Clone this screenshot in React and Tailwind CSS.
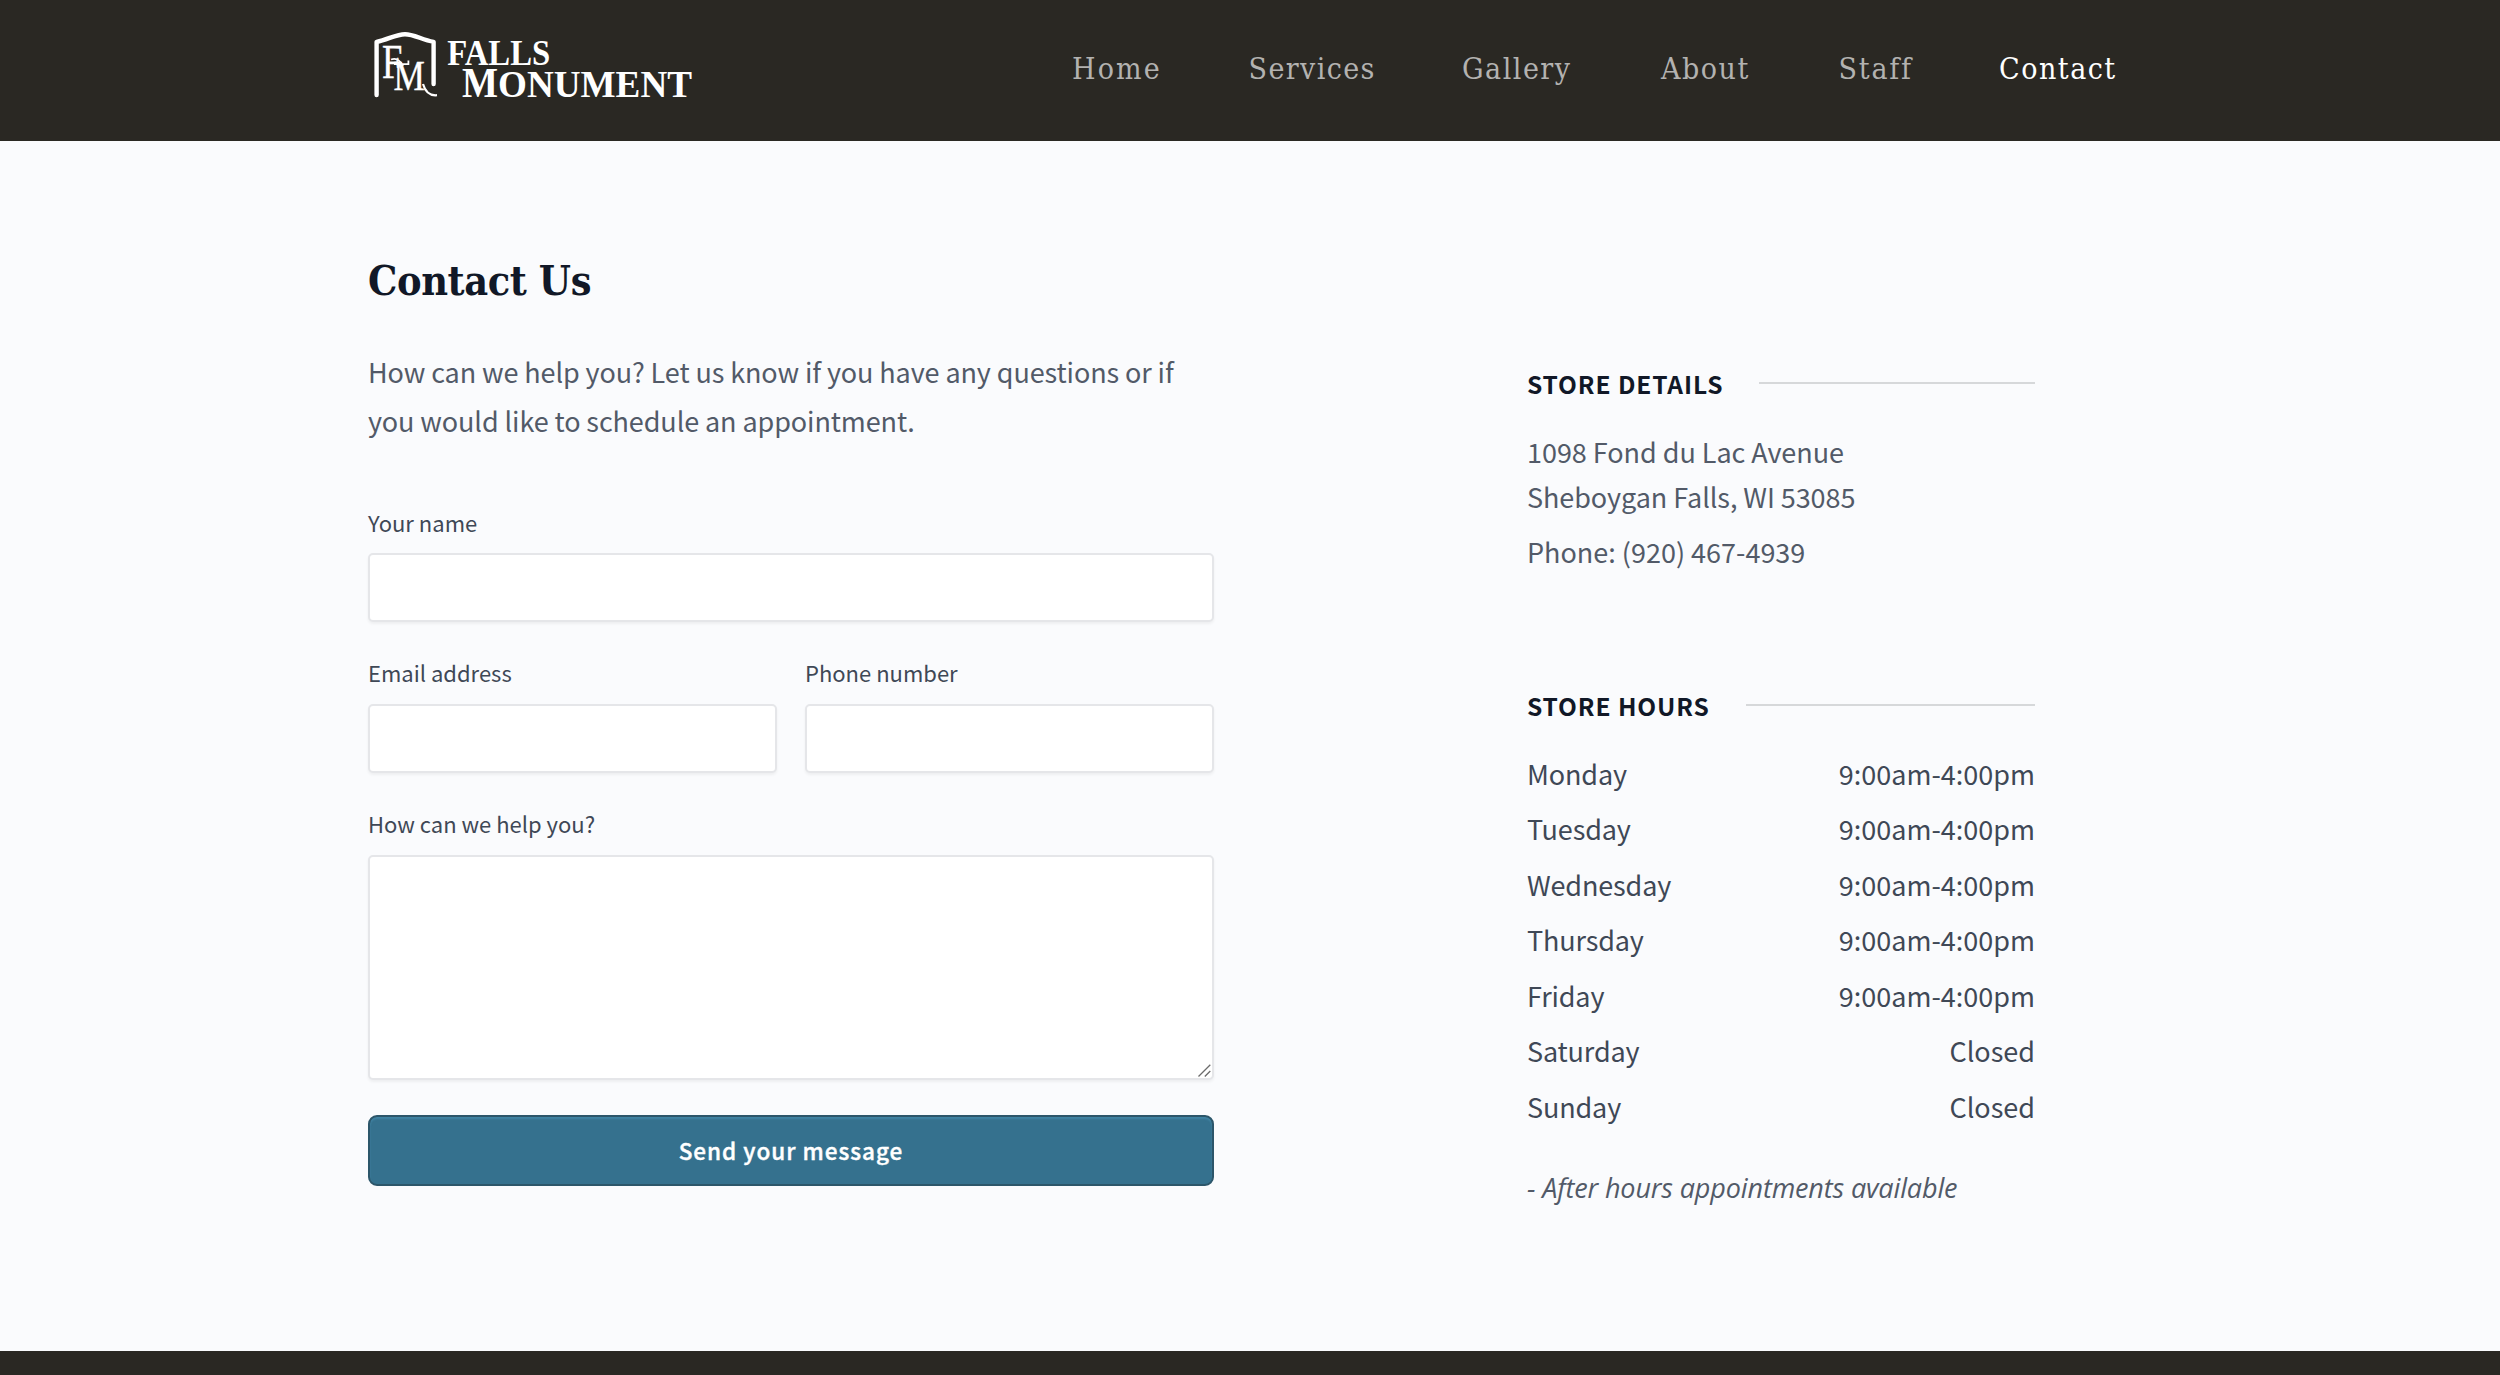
import React from "react";

const NAV = [
  { label: "Home", cls: "w-[88.5px] tracking-[2.1px]" },
  { label: "Services", cls: "w-[125.5px] tracking-[1.4px]" },
  { label: "Gallery", cls: "w-[111px] tracking-[1.5px]" },
  { label: "About", cls: "w-[89.5px] tracking-[1.5px]" },
  { label: "Staff", cls: "w-[72.5px] tracking-[1.8px]" },
  { label: "Contact", cls: "w-[118px] tracking-[1.5px]", active: true },
];

const HOURS = [
  ["Monday", "9:00am-4:00pm"],
  ["Tuesday", "9:00am-4:00pm"],
  ["Wednesday", "9:00am-4:00pm"],
  ["Thursday", "9:00am-4:00pm"],
  ["Friday", "9:00am-4:00pm"],
  ["Saturday", "Closed"],
  ["Sunday", "Closed"],
];

const FIELD =
  "block w-full rounded-[5px] border-2 border-[#e5e6e9] bg-white shadow-[0_2px_3px_rgba(0,0,0,0.05)] outline-none";

function Logo() {
  return (
    <svg
      width="328"
      height="76"
      viewBox="18 18 328 76"
      fill="#fff"
      fontFamily="'Liberation Serif', serif"
      role="img"
      aria-label="Falls Monument"
    >
      <path
        d="M26.6 85V31.8C38 29.5 46 24.2 55 24.2S72 29.8 83.6 31.8V74"
        fill="none"
        stroke="#fff"
        strokeWidth="4.4"
        strokeLinecap="round"
        strokeLinejoin="round"
      />
      <text transform="translate(32 67.6) scale(.76 1)" fontSize="48" stroke="#fff" strokeWidth=".4">F</text>
      <text transform="translate(43.6 79.8) scale(.84 1)" fontSize="42" stroke="#fff" strokeWidth=".4">M</text>
      <path d="M41 49.5C46 47.5 50 50 53 56M44 54.2H58.4V50.5" fill="none" stroke="#fff" strokeWidth="1.8" />
      <path d="M73 74C75 81 79 86 87 85.2" fill="none" stroke="#fff" strokeWidth="2.2" />
      <g fontWeight="700">
        <text x="97.2" y="55" fontSize="36.5" textLength="103" lengthAdjust="spacingAndGlyphs">FALLS</text>
        <text x="112" y="87" fontSize="42" textLength="36" lengthAdjust="spacingAndGlyphs">M</text>
        <text x="148" y="87" fontSize="37" textLength="194" lengthAdjust="spacingAndGlyphs">ONUMENT</text>
      </g>
    </svg>
  );
}

function Field({ label, children, className = "" }) {
  return (
    <label className={`block ${className}`}>
      <span className="block h-9 text-[22px] leading-9 text-[#3f4856]">{label}</span>
      {children}
    </label>
  );
}

function SectionTitle({ children }) {
  return (
    <div className="flex items-center gap-[36px]">
      <h2 className="text-[24.5px] leading-[35px] font-bold tracking-[0.9px] text-[#111827] uppercase">{children}</h2>
      <div className="mb-px h-[2px] flex-1 bg-[#d6d8da]" />
    </div>
  );
}

export default function App() {
  return (
    <div className="flex h-[1375px] w-[2500px] flex-col overflow-hidden bg-[#fafbfd] [font-family:'Noto_Sans_CJK_SC',sans-serif]">
      <header className="h-[141px] shrink-0 bg-[#2a2823]">
        <div className="mx-auto flex w-[1764px] justify-between pt-[28px]">
          <Logo />
          <nav className="mr-[15px] flex gap-[88px] pt-[21px] text-[30px] leading-[40px] [font-family:'DejaVu_Serif_Condensed','DejaVu_Serif',serif]">
            {NAV.map((n) => (
              <a key={n.label} href="#" className={`${n.cls} whitespace-nowrap ${n.active ? "text-white" : "text-[#b3b2b0]"}`}>
                {n.label}
              </a>
            ))}
          </nav>
        </div>
      </header>

      <main className="flex h-[1210px] shrink-0 pl-[368px]">
        <section className="w-[846px] pt-[115px]">
          <h1 className="text-[41px] leading-[50px] font-bold tracking-[-0.4px] text-[#111827] [font-family:'DejaVu_Serif_Condensed','DejaVu_Serif',serif]">
            Contact Us
          </h1>
          <p className="mt-[41px] text-[27px] leading-[49px] tracking-[-0.1px] whitespace-nowrap text-[#525a68]">
            How can we help you? Let us know if you have any questions or if
            <br />
            you would like to schedule an appointment.
          </p>
          <form className="mt-[59px]">
            <Field label="Your name">
              <input className={`${FIELD} mt-[13px] h-[69px]`} />
            </Field>
            <div className="mt-8 flex gap-7">
              <Field label="Email address" className="flex-1">
                <input className={`${FIELD} mt-[14px] h-[69px]`} />
              </Field>
              <Field label="Phone number" className="flex-1">
                <input className={`${FIELD} mt-[14px] h-[69px]`} />
              </Field>
            </div>
            <Field label="How can we help you?" className="relative mt-8">
              <textarea className={`${FIELD} mt-[14px] h-[225px] resize-none`} />
              <svg className="absolute right-[3px] bottom-[3px]" width="13" height="13" viewBox="0 0 13 13" stroke="#6b6b6b" strokeWidth="1.3">
                <path d="M.5 12.5L12.3.7M6.8 12.5L12.3 7" />
              </svg>
            </Field>
            <button
              type="button"
              className="mt-[35px] block h-[71px] w-full rounded-[9px] border-2 border-[#2c566a] bg-[#35718e] pt-px text-[22.5px] font-medium tracking-[1px] text-white shadow-[inset_0_2px_2px_rgba(90,170,205,0.35)] [-webkit-text-stroke:0.4px_white]"
            >
              Send your message
            </button>
          </form>
        </section>

        <aside className="ml-[313px] w-[508px] pt-[225px] text-[27px] leading-[45px] whitespace-nowrap">
          <SectionTitle>Store Details</SectionTitle>
          <div className="mt-[28px] text-[#525a68]">
            <p>
              <span className="tracking-[-0.04px]">1098 Fond du Lac Avenue</span>
              <br />
              <span className="tracking-[-0.07px]">Sheboygan Falls, WI 53085</span>
            </p>
            <p className="mt-[10px]">Phone: (920) 467-4939</p>
          </div>
          <div className="mt-[114px]">
            <SectionTitle>Store Hours</SectionTitle>
          </div>
          <dl className="mt-[27.5px] flex flex-col gap-[10.5px] text-[#3f4856]">
            {HOURS.map(([day, time]) => (
              <div key={day} className="flex justify-between">
                <dt className="tracking-[-0.15px]">{day}</dt>
                <dd>{time}</dd>
              </div>
            ))}
          </dl>
          <p className="mt-[36px] tracking-[-0.14px] text-[#525a68] italic [font-family:'Open_Sans',sans-serif]">
            - After hours appointments available
          </p>
        </aside>
      </main>

      <footer className="h-[24px] shrink-0 bg-[#2a2823]" />
    </div>
  );
}
